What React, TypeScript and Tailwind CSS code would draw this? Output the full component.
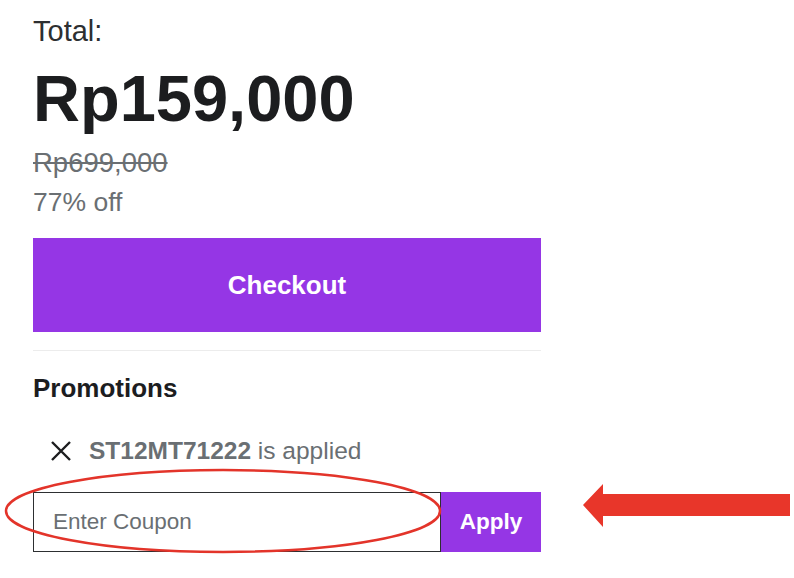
import React from 'react';

const font = { fontFamily: '"Liberation Sans", Arial, sans-serif' };

const App: React.FC = () => {
  return (
    <div className="relative w-[794px] h-[578px] bg-white overflow-hidden" style={font}>
      <div className="w-[508px] ml-[33px] pt-[17px] flex flex-col">
        <p className="text-[29px] leading-none text-[#2d2f31]">Total:</p>
        <p className="mt-[20px] text-[65px] leading-none font-bold text-[#1c1d1f]">Rp159,000</p>
        <p className="mt-[18px] text-[27.5px] leading-none text-[#6a6f73] line-through">Rp699,000</p>
        <p className="mt-[12px] text-[26.5px] leading-none text-[#6a6f73]">77% off</p>

        <button className="mt-[23px] h-[94px] w-full bg-[#9536e5] text-white text-[26px] font-bold">
          Checkout
        </button>

        <div className="mt-[18px] h-px bg-[#ececec]" />

        <h3 className="mt-[24px] text-[26px] leading-none font-bold text-[#1c1d1f]">Promotions</h3>

        <div className="mt-[38px] flex items-center pl-[17px] gap-[17px]">
          <svg width="22" height="22" viewBox="0 0 22 22" fill="none" stroke="#1c1d1f" strokeWidth="2.4">
            <path d="M2 2L20 20M20 2L2 20" />
          </svg>
          <p className="text-[24.5px] leading-none text-[#6a6f73]">
            <span className="font-bold">ST12MT71222</span> is applied
          </p>
        </div>

        <div className="mt-[28px] flex h-[60px]">
          <div className="flex-1 border-[1.5px] border-[#2d2f31] flex items-center pl-[19px]">
            <span className="text-[22.5px] text-[#6a6f73]">Enter Coupon</span>
          </div>
          <button className="w-[100px] bg-[#9536e5] text-white text-[22.5px] font-bold">Apply</button>
        </div>
      </div>

      {/* annotations */}
      <svg className="absolute left-0 top-0 pointer-events-none" width="794" height="578">
        <ellipse cx="223" cy="511" rx="217" ry="41" fill="none" stroke="#e3342a" strokeWidth="2.5" />
        <polygon points="583,505 603,484 603,494 790,494 790,516 603,516 603,527" fill="#e8362a" />
      </svg>
    </div>
  );
};

export default App;
